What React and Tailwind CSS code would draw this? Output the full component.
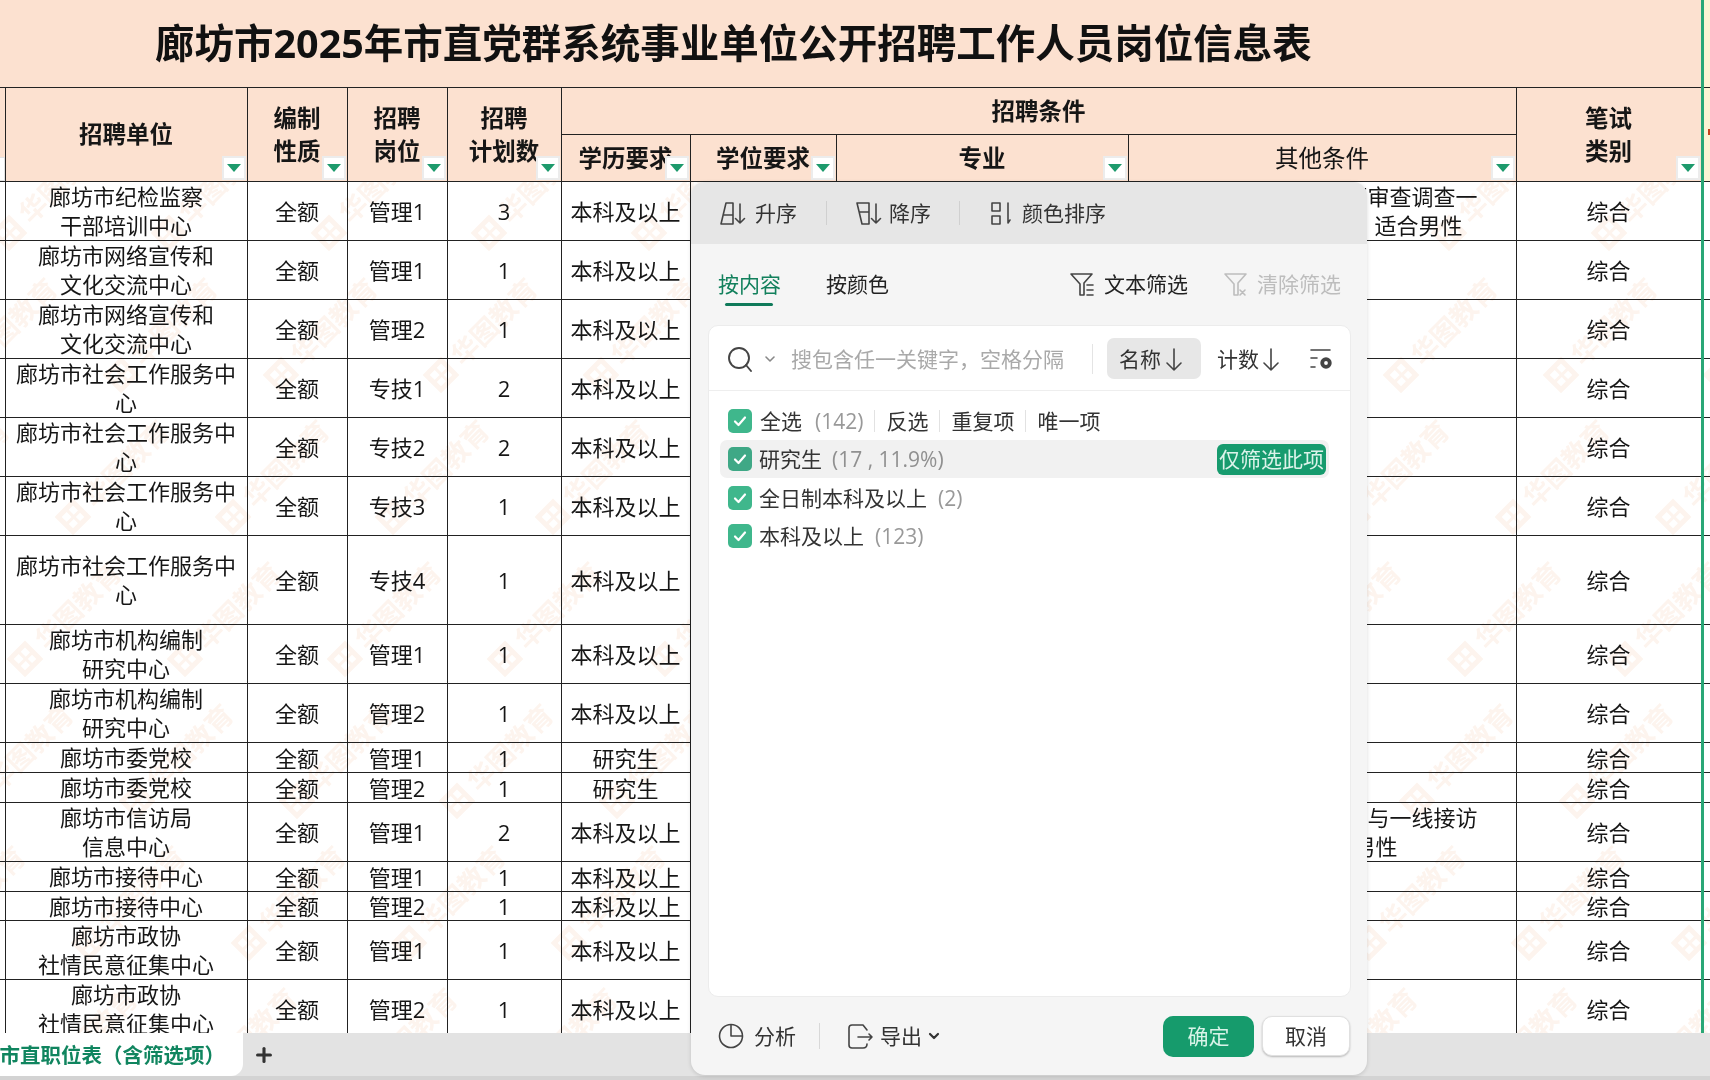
import React from "react";
import { Plus } from "lucide-react";

const rows = [
  { unit: "廊坊市纪检监察\n干部培训中心", post: "管理1", num: 3, edu: "本科及以上", h: "h-[59px]", other: ["事审查调查一", "适合男性"] },
  { unit: "廊坊市网络宣传和\n文化交流中心", post: "管理1", num: 1, edu: "本科及以上", h: "h-[59px]" },
  { unit: "廊坊市网络宣传和\n文化交流中心", post: "管理2", num: 1, edu: "本科及以上", h: "h-[59px]" },
  { unit: "廊坊市社会工作服务中心", post: "专技1", num: 2, edu: "本科及以上", h: "h-[59px]" },
  { unit: "廊坊市社会工作服务中心", post: "专技2", num: 2, edu: "本科及以上", h: "h-[59px]" },
  { unit: "廊坊市社会工作服务中心", post: "专技3", num: 1, edu: "本科及以上", h: "h-[59px]" },
  { unit: "廊坊市社会工作服务中心", post: "专技4", num: 1, edu: "本科及以上", h: "h-[89px]" },
  { unit: "廊坊市机构编制\n研究中心", post: "管理1", num: 1, edu: "本科及以上", h: "h-[59px]" },
  { unit: "廊坊市机构编制\n研究中心", post: "管理2", num: 1, edu: "本科及以上", h: "h-[59px]" },
  { unit: "廊坊市委党校", post: "管理1", num: 1, edu: "研究生", h: "h-[30px]" },
  { unit: "廊坊市委党校", post: "管理2", num: 1, edu: "研究生", h: "h-[30px]" },
  { unit: "廊坊市信访局\n信息中心", post: "管理1", num: 2, edu: "本科及以上", h: "h-[59px]", other: ["参与一线接访", "合男性"] },
  { unit: "廊坊市接待中心", post: "管理1", num: 1, edu: "本科及以上", h: "h-[30px]" },
  { unit: "廊坊市接待中心", post: "管理2", num: 1, edu: "本科及以上", h: "h-[29px]", tight: true },
  { unit: "廊坊市政协\n社情民意征集中心", post: "管理1", num: 1, edu: "本科及以上", h: "h-[59px]" },
  { unit: "廊坊市政协\n社情民意征集中心", post: "管理2", num: 1, edu: "本科及以上", h: "h-[59px]" },
];

// faint repeating watermark over the sheet
const marks = [];
for (let j = 0; j < 7; j++) {
  for (let i = 0; i < 13; i++) {
    marks.push({ x: 1760 - i * 160 - ((j * 48) % 160), y: 40 + j * 142 });
  }
}

const cell = "border border-[#222] p-0 text-center align-middle";
const head = "border border-[#222] bg-[#fce1d0] p-0 text-center align-middle relative font-bold text-[23.5px] leading-[33px]";

const FilterBtn = () => (
  <span className="absolute right-[1px] bottom-[1px] flex h-[24px] w-[24px] items-center justify-center border-2 border-[#ececec] bg-white">
    <span className="h-0 w-0 border-x-[7px] border-t-[8px] border-x-transparent border-t-[#1d9a6c]" />
  </span>
);

const Icon = ({ className = "", w = 28, h = 26, children }) => (
  <svg className={className} width={w} height={h} viewBox={`0 0 ${w} ${h}`} fill="none" stroke="currentColor" strokeWidth="1.6" strokeLinecap="round" strokeLinejoin="round">
    {children}
  </svg>
);

const Check = ({ color }) => (
  <span className={`flex h-[24px] w-[24px] shrink-0 items-center justify-center rounded-[5px] ${color}`}>
    <svg width="14" height="12" viewBox="0 0 14 12" fill="none" stroke="white" strokeWidth="2.2" strokeLinecap="round" strokeLinejoin="round">
      <path d="M2 6.5 L5.5 10 L12 2.5" />
    </svg>
  </span>
);

const Sep = ({ className = "h-[22px] bg-[#d9d9d9]" }) => <span className={`w-px shrink-0 ${className}`} />;

const FilterPanel = () => (
  <div className="absolute left-[691px] top-[182px] flex h-[893px] w-[676px] flex-col overflow-hidden rounded-[14px] bg-[#f5f5f5] text-[21px] leading-[30px] text-[#333] shadow-[0_1px_4px_rgba(0,0,0,0.15)]">
    <div className="flex h-[62px] shrink-0 items-center bg-[#e6e6e6] pl-[28px]">
      <Icon className="text-[#444]">
        <path d="M2 24 L7 3 H14 V24 Z M5 15 H14 M21 4 V23 M16.5 18.5 L21 23 L25.5 18.5" />
      </Icon>
      <span className="ml-[8px]">升序</span>
      <Sep className="ml-[29px] h-[24px] bg-[#d0d0d0]" />
      <Icon className="ml-[28px] text-[#444]">
        <path d="M2 3 H14 V24 H7 Z M4 12 H14 M21 4 V23 M16.5 18.5 L21 23 L25.5 18.5" />
      </Icon>
      <span className="ml-[6px]">降序</span>
      <Sep className="ml-[28px] h-[24px] bg-[#d0d0d0]" />
      <Icon className="ml-[30px] text-[#444]" w={24}>
        <path d="M2 3 H10 V11 H2 Z M2 16 H10 V24 H2 Z M18 3 V23 L20 20" />
      </Icon>
      <span className="ml-[8px]">颜色排序</span>
    </div>

    <div className="flex h-[81px] shrink-0 items-center pb-[2px] pl-[27px] pr-[26px]">
      <span className="relative text-[#12805c]">
        按内容
        <span className="absolute -bottom-[7px] left-[7px] h-[3px] w-[48px] rounded-full bg-[#0f7a5a]" />
      </span>
      <span className="ml-[45px] text-[#222]">按颜色</span>
      <div className="ml-auto flex items-center text-[#222]">
        <Icon className="text-[#444]" w={26}>
          <path d="M2 3 H23 L15 12 V24 H11 V13 Z M18 14 H24 M18 19 H24 M18 24 H24" />
        </Icon>
        <span className="ml-[9px]">文本筛选</span>
      </div>
      <div className="ml-[35px] flex items-center text-[#bdbdbd]">
        <Icon w={26}>
          <path d="M2 3 H23 L15 12 V24 H11 V13 Z M17 19 L22 24 M22 19 L17 24" />
        </Icon>
        <span className="ml-[8px]">清除筛选</span>
      </div>
    </div>

    <div className="ml-[17px] mr-[16px] flex flex-1 flex-col rounded-[10px] border border-[#ececec] bg-white">
      <div className="flex h-[65px] shrink-0 items-center border-b border-[#eee] pl-[18px] pt-[1px]">
        <Icon className="text-[#444]" w={26}>
          <circle cx="12" cy="12" r="10" strokeWidth="1.9" />
          <path d="M19 19 L24 25" strokeWidth="1.9" />
        </Icon>
        <Icon className="ml-[11px] text-[#888]" w={12} h={8}>
          <path d="M2 2 L6 6 L10 2" />
        </Icon>
        <span className="ml-[15px] text-[#a9a9a9]">搜包含任一关键字，空格分隔</span>
        <Sep className="ml-[28px] h-[30px] bg-[#e4e4e4]" />
        <span className="ml-[14px] flex h-[41px] w-[94px] items-center gap-[3px] rounded-[7px] bg-[#e7e7e7] pl-[12px]">
          名称
          <Icon className="text-[#444]" w={20} h={26}>
            <path d="M10 3 V24 M3 17 L10 24 L17 17" />
          </Icon>
        </span>
        <span className="ml-[16px] flex items-center gap-[2px]">
          计数
          <Icon className="text-[#444]" w={20} h={26}>
            <path d="M10 3 V24 M3 17 L10 24 L17 17" />
          </Icon>
        </span>
        <Icon className="ml-[27px] text-[#444]" w={26} h={24}>
          <path d="M3 3 H22 M3 11 H9 M3 20 H7" />
          <circle cx="18" cy="16" r="3.8" strokeWidth="3.8" />
        </Icon>
      </div>

      <div className="flex flex-col pl-[11px] pr-[10px] pt-[11px]">
        <div className="flex h-[38px] items-center pl-[8px]">
          <Check color="bg-[#3fb78c]" />
          <span className="ml-[8px]">全选</span>
          <span className="ml-[13px] text-[#999]">(142)</span>
          <Sep className="ml-[11px] h-[22px] bg-[#e2e2e2]" />
          <span className="ml-[11px]">反选</span>
          <Sep className="ml-[11px] h-[22px] bg-[#e2e2e2]" />
          <span className="ml-[11px]">重复项</span>
          <Sep className="ml-[11px] h-[22px] bg-[#e2e2e2]" />
          <span className="ml-[11px]">唯一项</span>
        </div>
        <div className="mr-[11px] flex h-[38px] items-center rounded-[7px] bg-[#f1f1f1] pl-[8px] pr-[3px]">
          <Check color="bg-[#3fa886]" />
          <span className="ml-[7px]">研究生</span>
          <span className="ml-[10px] text-[#909090]">(17 , 11.9%)</span>
          <span className="ml-auto flex h-[31px] w-[109px] items-center justify-center whitespace-nowrap rounded-[6px] bg-[#179b6e] text-[#dcf3ea]">仅筛选此项</span>
        </div>
        <div className="flex h-[39px] items-center pl-[8px]">
          <Check color="bg-[#3fb78c]" />
          <span className="ml-[7px]">全日制本科及以上</span>
          <span className="ml-[11px] text-[#999]">(2)</span>
        </div>
        <div className="flex h-[38px] items-center pl-[8px]">
          <Check color="bg-[#3fb78c]" />
          <span className="ml-[7px]">本科及以上</span>
          <span className="ml-[11px] text-[#999]">(123)</span>
        </div>
      </div>
    </div>

    <div className="flex h-[78px] shrink-0 items-center pl-[27px] pr-[17px]">
      <Icon className="text-[#444]" w={26}>
        <circle cx="13" cy="13" r="11.5" />
        <path d="M13 2 V13 H24" />
      </Icon>
      <span className="ml-[10px]">分析</span>
      <Sep className="ml-[23px] h-[26px] bg-[#d8d8d8]" />
      <Icon className="ml-[26px] text-[#444]" w={28}>
        <path d="M21 7 L17 2 H6 Q3 2 3 5 V22 Q3 25 6 25 H17 Q21 25 21 21 M12 14 H26 M23 11 L26 14 L23 17" />
      </Icon>
      <span className="ml-[6px]">导出</span>
      <Icon className="ml-[6px] text-[#333]" w={12} h={8}>
        <path d="M2 2 L6 6 L10 2" strokeWidth="2.2" />
      </Icon>
      <span className="ml-auto flex h-[41px] w-[91px] items-center justify-center rounded-[10px] bg-[#169b6c] text-[#d8f3e8]">确定</span>
      <span className="ml-[8px] flex h-[40px] w-[88px] items-center justify-center rounded-[10px] border border-[#e0e0e0] bg-white shadow-[0_1px_2px_rgba(0,0,0,0.25)]">取消</span>
    </div>
  </div>
);

export default function App() {
  return (
    <div className="relative flex h-[1080px] w-[1710px] flex-col overflow-hidden bg-white font-['Open_Sans','Noto_Sans_CJK_SC',sans-serif] text-[#161616]">
      <div className="flex h-[87px] shrink-0">
        <div className="flex w-[1701px] items-center bg-[#fce1d0] pl-[155px] text-[39.5px] font-bold text-[#111]">
          廊坊市2025年市直党群系统事业单位公开招聘工作人员岗位信息表
        </div>
        <div className="flex-1 bg-[#fdf3d3]" />
      </div>

      <div className="relative flex-1 overflow-hidden">
        <table className="w-[1710px] table-fixed border-collapse text-[22px] leading-[28px]">
          <colgroup>
            <col className="w-[5px]" />
            <col className="w-[242px]" />
            <col className="w-[100px]" />
            <col className="w-[100px]" />
            <col className="w-[114px]" />
            <col className="w-[129px]" />
            <col className="w-[146px]" />
            <col className="w-[292px]" />
            <col className="w-[388px]" />
            <col className="w-[185px]" />
            <col className="w-[9px]" />
          </colgroup>
          <thead>
            <tr className="h-[47px]">
              <th rowSpan={2} className="relative border border-l-0 border-[#222] bg-[#fce1d0] p-0">
                <span className="absolute bottom-0 right-0 h-[24px] w-[5px] border border-l-0 border-[#e2e2e2] bg-white" />
              </th>
              <th rowSpan={2} className={head}>招聘单位<FilterBtn /></th>
              <th rowSpan={2} className={head}>编制<br />性质<FilterBtn /></th>
              <th rowSpan={2} className={head}>招聘<br />岗位<FilterBtn /></th>
              <th rowSpan={2} className={head}>招聘<br />计划数<FilterBtn /></th>
              <th colSpan={4} className={head}>招聘条件</th>
              <th rowSpan={2} className={head}>笔试<br />类别<FilterBtn /></th>
              <th rowSpan={2} className="relative border-y border-[#222] bg-[#fdf3d3] p-0">
                <span className="absolute right-0 top-[41px] h-[6px] w-[2px] bg-[#c8401a]" />
              </th>
            </tr>
            <tr className="h-[47px]">
              <th className={head}>学历要求<FilterBtn /></th>
              <th className={head}>学位要求<FilterBtn /></th>
              <th className={head}>专业<FilterBtn /></th>
              <th className={`${head} !font-normal`}>其他条件<FilterBtn /></th>
            </tr>
          </thead>
          <tbody>
            {rows.map((row, i) => (
              <tr key={i} className={row.h}>
                <td className="border border-l-0 border-[#222] p-0" />
                <td className={`${cell} whitespace-pre-line px-[10px] ${row.tight ? "" : "leading-[29px]"}`}>{row.unit}</td>
                <td className={cell}>全额</td>
                <td className={cell}>{row.post}</td>
                <td className={cell}>{row.num}</td>
                <td className={cell}>{row.edu}</td>
                <td className={cell} />
                <td className={cell} />
                <td className={`${cell} !text-right`}>
                  {row.other && (
                    <div className="flex flex-col items-end whitespace-nowrap leading-[29px]">
                      <span className="pr-[38px]">{row.other[0]}</span>
                      <span className={i === 0 ? "pr-[53px]" : "pr-[118px]"}>{row.other[1]}</span>
                    </div>
                  )}
                </td>
                <td className={cell}>综合</td>
                <td className="border-y border-[#222] p-0" />
              </tr>
            ))}
          </tbody>
        </table>

        <div className="pointer-events-none absolute inset-x-0 bottom-0 top-[95px] overflow-hidden mix-blend-multiply">
          {marks.map((m, i) => (
            <span
              key={i}
              className="absolute flex origin-left -rotate-45 items-center gap-[8px] whitespace-nowrap text-[27px] font-bold text-[#fdf4ee]"
              style={{ left: m.x, top: m.y }}
            >
              <span className="grid h-[26px] w-[26px] grid-cols-2 gap-[3px] bg-[#fdf4ee] p-[5px]">
                <span className="bg-white" />
                <span className="bg-white" />
                <span className="bg-white" />
                <span className="bg-white" />
              </span>
              华图教育
            </span>
          ))}
        </div>
      </div>

      <div className="flex h-[43px] shrink-0 items-center bg-[#e3e3e3]">
        <div className="flex h-full w-[243px] items-center justify-end overflow-hidden whitespace-nowrap rounded-br-[12px] bg-white pr-[18px] pt-[2px] text-[20.5px] font-bold text-[#10855f]">
          市直职位表（含筛选项）
        </div>
        <Plus className="ml-[10px] text-[#333]" size={22} strokeWidth={3.4} />
      </div>
      <div className="h-[4px] shrink-0 bg-[#d3d3d3]" />

      <div className="absolute bottom-[47px] left-[1701px] top-0 w-[2.5px] bg-[#2aa776]" />
      <FilterPanel />
    </div>
  );
}
